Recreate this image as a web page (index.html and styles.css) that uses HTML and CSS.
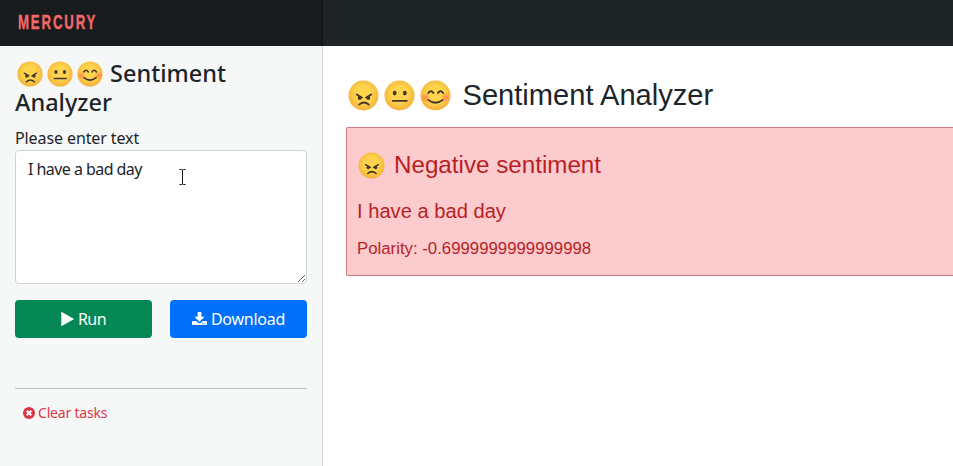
FILE: index.html
```html
<!DOCTYPE html>
<html lang="en">
<head>
<meta charset="utf-8">
<title>Mercury</title>
<link rel="stylesheet" href="styles.css">
</head>
<body>
<svg class="defs" width="0" height="0" aria-hidden="true">
  <defs>
    <radialGradient id="skin" cx=".5" cy=".45" r=".55"><stop offset=".5" stop-color="#fdd44c"/><stop offset="1" stop-color="#f5b13a"/></radialGradient>
    <radialGradient id="blush"><stop offset="0" stop-color="#ff7555" stop-opacity=".8"/><stop offset="1" stop-color="#ff7555" stop-opacity="0"/></radialGradient>
  </defs>
  <symbol id="angry" viewBox="0 0 32 32"><circle cx="16" cy="16" r="15.5" fill="url(#skin)"/><g fill="none" stroke="#45332c" stroke-width="1.8" stroke-linecap="round"><path d="M9 15l5.500 3.200M24 15l-5.500 3.200"/><path d="M11.500 25.500q5-4.500 10 0"/></g><circle cx="12" cy="18.500" r="2" fill="#45332c"/><circle cx="21" cy="18.500" r="2" fill="#45332c"/></symbol>
  <symbol id="neutral" viewBox="0 0 32 32"><circle cx="16" cy="16" r="15.500" fill="url(#skin)"/><ellipse cx="11" cy="13.500" rx="2" ry="2.500" fill="#45332c"/><ellipse cx="21.500" cy="13.500" rx="2" ry="2.500" fill="#45332c"/><path d="M9 21.500h14.500" stroke="#45332c" stroke-width="1.900" stroke-linecap="round"/></symbol>
  <symbol id="smile" viewBox="0 0 32 32"><circle cx="16" cy="16" r="15.500" fill="url(#skin)"/><circle cx="5.500" cy="18" r="5" fill="url(#blush)"/><circle cx="26.500" cy="18" r="5" fill="url(#blush)"/><g fill="none" stroke="#45332c" stroke-width="1.900" stroke-linecap="round"><path d="M8.500 13.500q2.700-4 5.400 0M18.500 13.500q2.700-4 5.400 0M8.500 20.500q7.500 6 15 0"/></g></symbol>
</svg>
<header class="topbar">
  <div class="brand"><span class="logo">MERCURY</span></div>
</header>
<div class="layout">
  <aside class="sidebar">
    <h4 class="title"><span class="faces"><svg><use href="#angry"/></svg><svg><use href="#neutral"/></svg><svg><use href="#smile"/></svg></span>Sentiment <br>Analyzer</h4>
    <label class="label" for="text">Please enter text</label>
    <div class="field"><textarea id="text">I have a bad day</textarea>
      <svg class="cursor" viewBox="0 0 9 18"><path d="M1.500 1.500h2q1 0 1 1q0-1 1-1h2M4.500 2v14M1.500 16.500h2q1 0 1-1q0 1 1 1h2" fill="none" stroke="#fff" stroke-width="3"/><path d="M1.500 1.500h2q1 0 1 1q0-1 1-1h2M4.500 2v14M1.500 16.500h2q1 0 1-1q0 1 1 1h2" fill="none" stroke="#111" stroke-width="1"/></svg>
    </div>
    <div class="actions">
      <button class="btn run"><svg viewBox="0 0 13 16"><path d="M.3 1.100v13.600q0 .6.5.3L12.700 8.300q.4-.3 0-.6L.8.900Q.3.600.3 1.100z" fill="currentColor"/></svg><span>Run</span></button>
      <button class="btn download"><svg viewBox="0 0 16 16"><path d="M6 .5h4v5h3.500L8 11 2.500 5.500H6zM1 10h3.500l2.200 2q1.300 1.200 2.600 0l2.200-2H15q1 0 1 1v2.500q0 1-1 1H1q-1 0-1-1V11q0-1 1-1zm10 2.500v1h1v-1zm2.200 0v1h1v-1z" fill="currentColor" fill-rule="evenodd"/></svg><span>Download</span></button>
    </div>
    <hr>
    <button class="clear"><svg viewBox="0 0 12 12"><circle cx="6" cy="6" r="6" fill="currentColor"/><path d="M3.700 3.700l4.600 4.600M8.300 3.700L3.700 8.300" stroke="#fff" stroke-width="2"/></svg><span>Clear tasks</span></button>
  </aside>
  <main class="content">
    <h1><span class="faces"><svg><use href="#angry"/></svg><svg><use href="#neutral"/></svg><svg><use href="#smile"/></svg></span>Sentiment Analyzer</h1>
    <section class="result">
      <h2><svg><use href="#angry"/></svg>Negative sentiment</h2>
      <h3>I have a bad day</h3>
      <p>Polarity: -0.6999999999999998</p>
    </section>
  </main>
</div>
</body>
</html>
```
FILE: styles.css
```css
* { box-sizing: border-box; }
body { margin: 0; height: 466px; overflow: hidden; background: #fff; color: #1c2529; font: 16px/24px "Noto Sans", sans-serif; }
.defs { position: absolute; }
.topbar { height: 46px; background: #1f2427; }
.brand { width: 323px; height: 46px; padding: 11px 0 0 18px; background: #181b1d; border-right: 1px solid #111314; }
.logo { display: block; width: 78px; color: #f3696a; font: bold 20px/22px "Liberation Sans", sans-serif; letter-spacing: 2.800px; transform: scaleX(.66); transform-origin: 0 0; -webkit-text-stroke: .4px #f3696a; }
.layout { display: flex; height: 420px; }
.sidebar { flex: none; width: 323px; padding: 13px 15px; background: #f6f8f7; border-right: 1px solid #d9dbdc; }
.title { margin: 0; font-size: 23.500px; line-height: 29px; font-weight: 500; height: 58px; }
.faces { display: inline-flex; }
.title .faces { gap: 4px; margin: 0 7px 0 2px; height: 26px; vertical-align: -5px; }
.title svg { width: 26px; height: 26px; }
.label { display: block; margin-top: 9px; height: 24px; letter-spacing: -.1px; }
.field { position: relative; height: 134px; }
textarea { display: block; width: 292px; height: 134px; padding: 6px 12px; border: 1px solid #ced4da; border-radius: 4px; background: #fff; color: #212529; font: 16px/24px "Noto Sans", sans-serif; letter-spacing: -.55px; resize: both; outline: 0; }
.cursor { position: absolute; left: 163px; top: 18px; width: 9px; height: 18px; }
.actions { display: flex; gap: 18px; margin-top: 16px; }
.btn { display: flex; width: 137px; height: 38px; align-items: center; justify-content: center; gap: 4px; padding: 0; border: 0; border-radius: 4px; color: #fff; font: 16px/24px "Noto Sans", sans-serif; letter-spacing: -.25px; }
.run { background: #048754; letter-spacing: -.5px; }
.download { background: #0070fb; }
.run svg { width: 13px; height: 16px; }
.download svg { width: 15px; height: 16px; }
hr { height: 1px; margin: 50px 0 0; border: 0; background: #bbbfc7; }
.clear { display: flex; align-items: center; gap: 3px; height: 21px; margin: 13px 0 0 8px; padding: 0; border: 0; background: none; color: #dc3545; font: 14px/21px "Noto Sans", sans-serif; letter-spacing: -.2px; }
.clear svg { width: 12px; height: 12px; }
.content { flex: 1; min-width: 0; padding: 31px 0 0 23px; font-family: "Liberation Sans", sans-serif; }
h1, h2, h3, p { margin: 0; font-weight: 400; white-space: nowrap; }
h1 { display: flex; align-items: center; height: 36px; font-size: 29.100px; }
h1 .faces { gap: 5px; margin: 0 11.500px 0 2px; }
h1 svg { width: 31px; height: 31px; }
.result { height: 149px; margin-top: 14px; padding: 22px 10px 0; background: #fccbce; border: 1px solid #d27a80; border-right: 0; border-radius: 2px 0 0 2px; color: #b81f25; }
h2 { display: flex; align-items: center; height: 30px; font-size: 24.200px; }
h2 svg { width: 27px; height: 27px; margin: 0 9px 0 1px; }
h3 { margin-top: 19px; font-size: 20.150px; line-height: 24px; }
.result p { margin-top: 14px; font-size: 16.800px; line-height: 24px; }
```
